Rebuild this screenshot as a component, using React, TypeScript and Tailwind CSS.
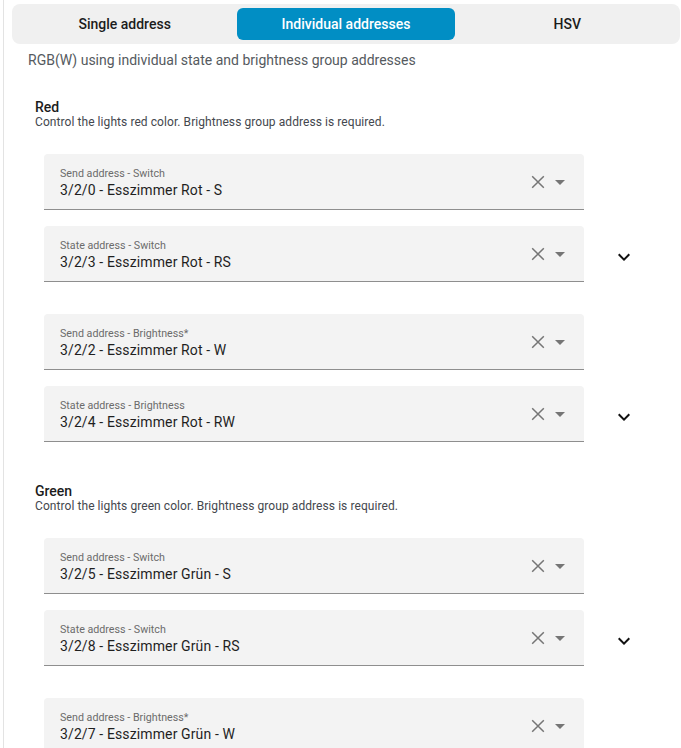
import React from "react";

const XIcon = () => (
  <svg width="24" height="24" viewBox="0 0 24 24" className="block">
    <path d="M8.2 6.2 19.8 17.8M19.8 6.2 8.2 17.8" stroke="#757575" strokeWidth="1.5" fill="none" />
  </svg>
);

const Caret = () => (
  <svg width="24" height="24" viewBox="0 0 24 24" className="block">
    <path d="M7 10l5 5 5-5z" fill="#757575" />
  </svg>
);

const Chevron = () => (
  <svg width="24" height="24" viewBox="0 0 24 24" className="block">
    <path d="M7.41 8.59 12 13.17l4.59-4.58L18 10l-6 6-6-6z" fill="#111" />
  </svg>
);

function Field({ label, value, chevron }: { label: string; value: string; chevron?: boolean }) {
  return (
    <div className="flex items-center">
      <div className="ml-[9px] w-[540px] h-[56px] bg-[#f3f3f3] rounded-t-[4px] border-b border-[#8e8e8e] flex items-center pl-4 pr-[12px]">
        <div className="flex-1 flex flex-col pt-[3px]">
          <span className="text-[10.7px] leading-[14px] text-[#6b6b6b]">{label}</span>
          <span className="text-[14px] leading-[20px] tracking-[0.12px] text-[#1f1f1f] -mt-[1px]">{value}</span>
        </div>
        <div className="flex items-center">
          <XIcon />
          <Caret />
        </div>
      </div>
      {chevron && (
        <div className="ml-[28px] mt-[6px]">
          <Chevron />
        </div>
      )}
    </div>
  );
}

function Group({ title, desc, fields }: { title: string; desc: string; fields: [string, string][] }) {
  return (
    <div>
      <div className="text-[14px] leading-[16px] font-medium text-[#1c1c1c]">{title}</div>
      <div className="text-[12px] leading-[14px] tracking-[0.07px] text-[#44474e]">{desc}</div>
      <div className="mt-[25px] flex flex-col">
        <div className="flex flex-col gap-4">
          <Field label={fields[0][0]} value={fields[0][1]} />
          <Field label={fields[1][0]} value={fields[1][1]} chevron />
        </div>
        <div className="flex flex-col gap-4 mt-8">
          <Field label={fields[2][0]} value={fields[2][1]} />
          <Field label={fields[3][0]} value={fields[3][1]} chevron />
        </div>
      </div>
    </div>
  );
}

export default function App() {
  return (
    <div className="bg-white w-[681px] h-[748px] overflow-hidden font-['Roboto',sans-serif]">
      <div className="ml-[3px] border-l border-[#e3e3e3] h-[748px] pt-1 pr-[1px]">
        <div className="ml-2 bg-[#f0f0f0] rounded-[8px] p-1 grid grid-cols-3 gap-1 h-[40px]">
          <button className="rounded-[6px] text-[14px] font-medium text-[#1c1c1c]">Single address</button>
          <button className="rounded-[6px] bg-[#018ec4] text-[14px] font-medium text-white">Individual addresses</button>
          <button className="rounded-[6px] text-[14px] font-medium text-[#1c1c1c]">HSV</button>
        </div>
        <p className="ml-6 mt-[6px] text-[14px] leading-[20px] text-[#555a60]">
          RGB(W) using individual state and brightness group addresses
        </p>
        <div className="pl-[31px] mt-[29px]">
          <Group
            title="Red"
            desc="Control the lights red color. Brightness group address is required."
            fields={[
              ["Send address - Switch", "3/2/0 - Esszimmer Rot - S"],
              ["State address - Switch", "3/2/3 - Esszimmer Rot - RS"],
              ["Send address - Brightness*", "3/2/2 - Esszimmer Rot - W"],
              ["State address - Brightness", "3/2/4 - Esszimmer Rot - RW"],
            ]}
          />
          <div className="mt-[41px]">
            <Group
              title="Green"
              desc="Control the lights green color. Brightness group address is required."
              fields={[
                ["Send address - Switch", "3/2/5 - Esszimmer Grün - S"],
                ["State address - Switch", "3/2/8 - Esszimmer Grün - RS"],
                ["Send address - Brightness*", "3/2/7 - Esszimmer Grün - W"],
                ["State address - Brightness", "3/2/9 - Esszimmer Grün - RW"],
              ]}
            />
          </div>
        </div>
      </div>
    </div>
  );
}
